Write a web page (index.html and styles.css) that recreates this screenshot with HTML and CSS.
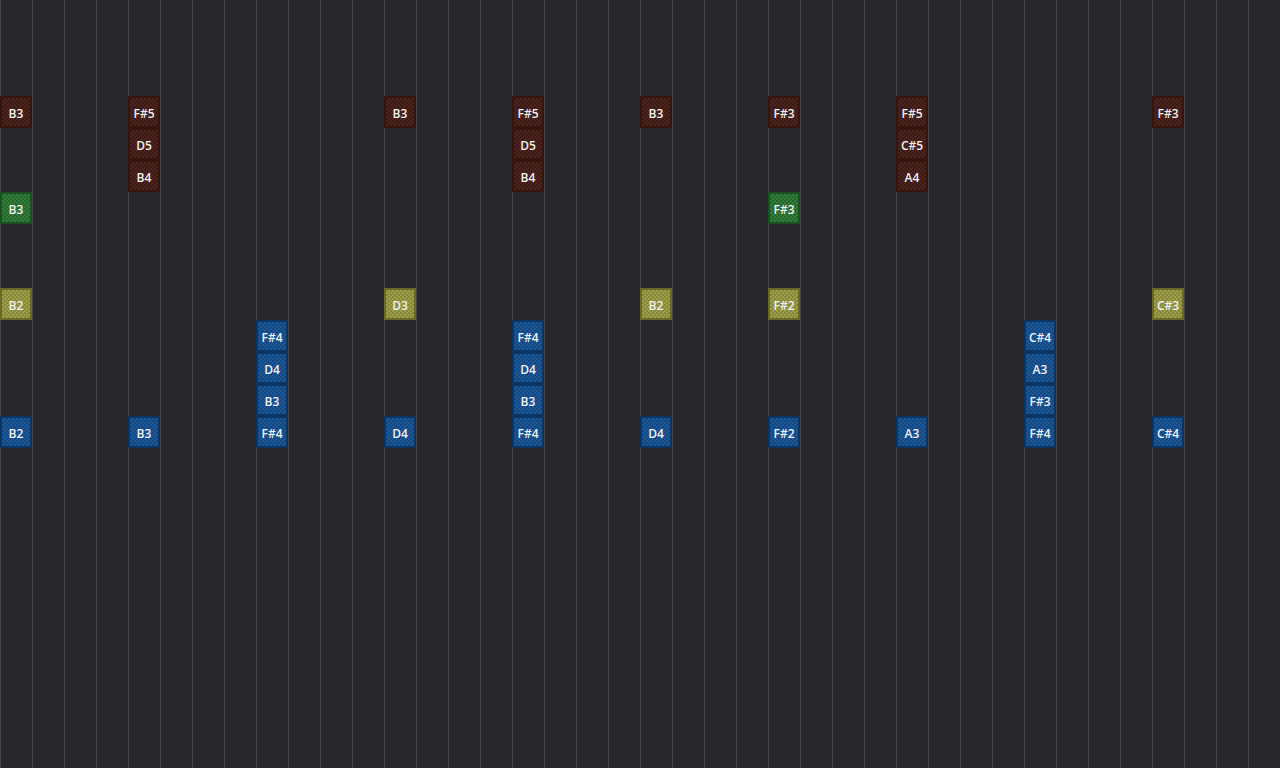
FILE: index.html
```html
<!DOCTYPE html>
<html lang="en">
<head>
	<meta charset="UTF-8">
	<title>Sequencer</title>
	<link rel="stylesheet" href="styles.css">
</head>
<body>
	<div class="board">
		<!-- step 1 -->
		<div class="note red" style="grid-area:4/1">B3</div>
		<div class="note green" style="grid-area:7/1">B3</div>
		<div class="note yellow" style="grid-area:10/1">B2</div>
		<div class="note blue" style="grid-area:14/1">B2</div>
		<!-- step 5 -->
		<div class="note red" style="grid-area:4/5">F#5</div>
		<div class="note red" style="grid-area:5/5">D5</div>
		<div class="note red" style="grid-area:6/5">B4</div>
		<div class="note blue" style="grid-area:14/5">B3</div>
		<!-- step 9 -->
		<div class="note blue" style="grid-area:11/9">F#4</div>
		<div class="note blue" style="grid-area:12/9">D4</div>
		<div class="note blue" style="grid-area:13/9">B3</div>
		<div class="note blue" style="grid-area:14/9">F#4</div>
		<!-- step 13 -->
		<div class="note red" style="grid-area:4/13">B3</div>
		<div class="note yellow" style="grid-area:10/13">D3</div>
		<div class="note blue" style="grid-area:14/13">D4</div>
		<!-- step 17 -->
		<div class="note red" style="grid-area:4/17">F#5</div>
		<div class="note red" style="grid-area:5/17">D5</div>
		<div class="note red" style="grid-area:6/17">B4</div>
		<div class="note blue" style="grid-area:11/17">F#4</div>
		<div class="note blue" style="grid-area:12/17">D4</div>
		<div class="note blue" style="grid-area:13/17">B3</div>
		<div class="note blue" style="grid-area:14/17">F#4</div>
		<!-- step 21 -->
		<div class="note red" style="grid-area:4/21">B3</div>
		<div class="note yellow" style="grid-area:10/21">B2</div>
		<div class="note blue" style="grid-area:14/21">D4</div>
		<!-- step 25 -->
		<div class="note red" style="grid-area:4/25">F#3</div>
		<div class="note green" style="grid-area:7/25">F#3</div>
		<div class="note yellow" style="grid-area:10/25">F#2</div>
		<div class="note blue" style="grid-area:14/25">F#2</div>
		<!-- step 29 -->
		<div class="note red" style="grid-area:4/29">F#5</div>
		<div class="note red" style="grid-area:5/29">C#5</div>
		<div class="note red" style="grid-area:6/29">A4</div>
		<div class="note blue" style="grid-area:14/29">A3</div>
		<!-- step 33 -->
		<div class="note blue" style="grid-area:11/33">C#4</div>
		<div class="note blue" style="grid-area:12/33">A3</div>
		<div class="note blue" style="grid-area:13/33">F#3</div>
		<div class="note blue" style="grid-area:14/33">F#4</div>
		<!-- step 37 -->
		<div class="note red" style="grid-area:4/37">F#3</div>
		<div class="note yellow" style="grid-area:10/37">C#3</div>
		<div class="note blue" style="grid-area:14/37">C#4</div>
	</div>
</body>
</html>
```
FILE: styles.css
```css
body{margin:0;background:#272729;overflow:hidden;}

.board{
	display:grid;
	grid-template-columns:repeat(40,32px);
	grid-template-rows:repeat(24,32px);
	width:1280px;height:768px;
	background:linear-gradient(to right,#454547 1px,transparent 1px) 0 0/32px 100%,#272729;
}

.note{
	box-sizing:border-box;
	display:flex;align-items:center;justify-content:center;
	padding-top:2px;
	border:2px solid;
	font-family:"Open Sans","DejaVu Sans",sans-serif;
	font-size:12px;font-weight:600;
	color:#f0f0f0;
	background-size:4px 4px;
}

/* checkered fills, two tones per colour */
.red{border-color:#35160f;background-image:conic-gradient(#4d231d 25%,#3c1a15 0 50%,#4d231d 0 75%,#3c1a15 0);}
.green{border-color:#1c4f22;background-image:conic-gradient(#307c38 25%,#26672d 0 50%,#307c38 0 75%,#26672d 0);}
.yellow{border-color:#6a6a28;background-image:conic-gradient(#9e9e4a 25%,#88883a 0 50%,#9e9e4a 0 75%,#88883a 0);}
.blue{border-color:#0c3462;background-image:conic-gradient(#1b5696 25%,#144882 0 50%,#1b5696 0 75%,#144882 0);}
```
